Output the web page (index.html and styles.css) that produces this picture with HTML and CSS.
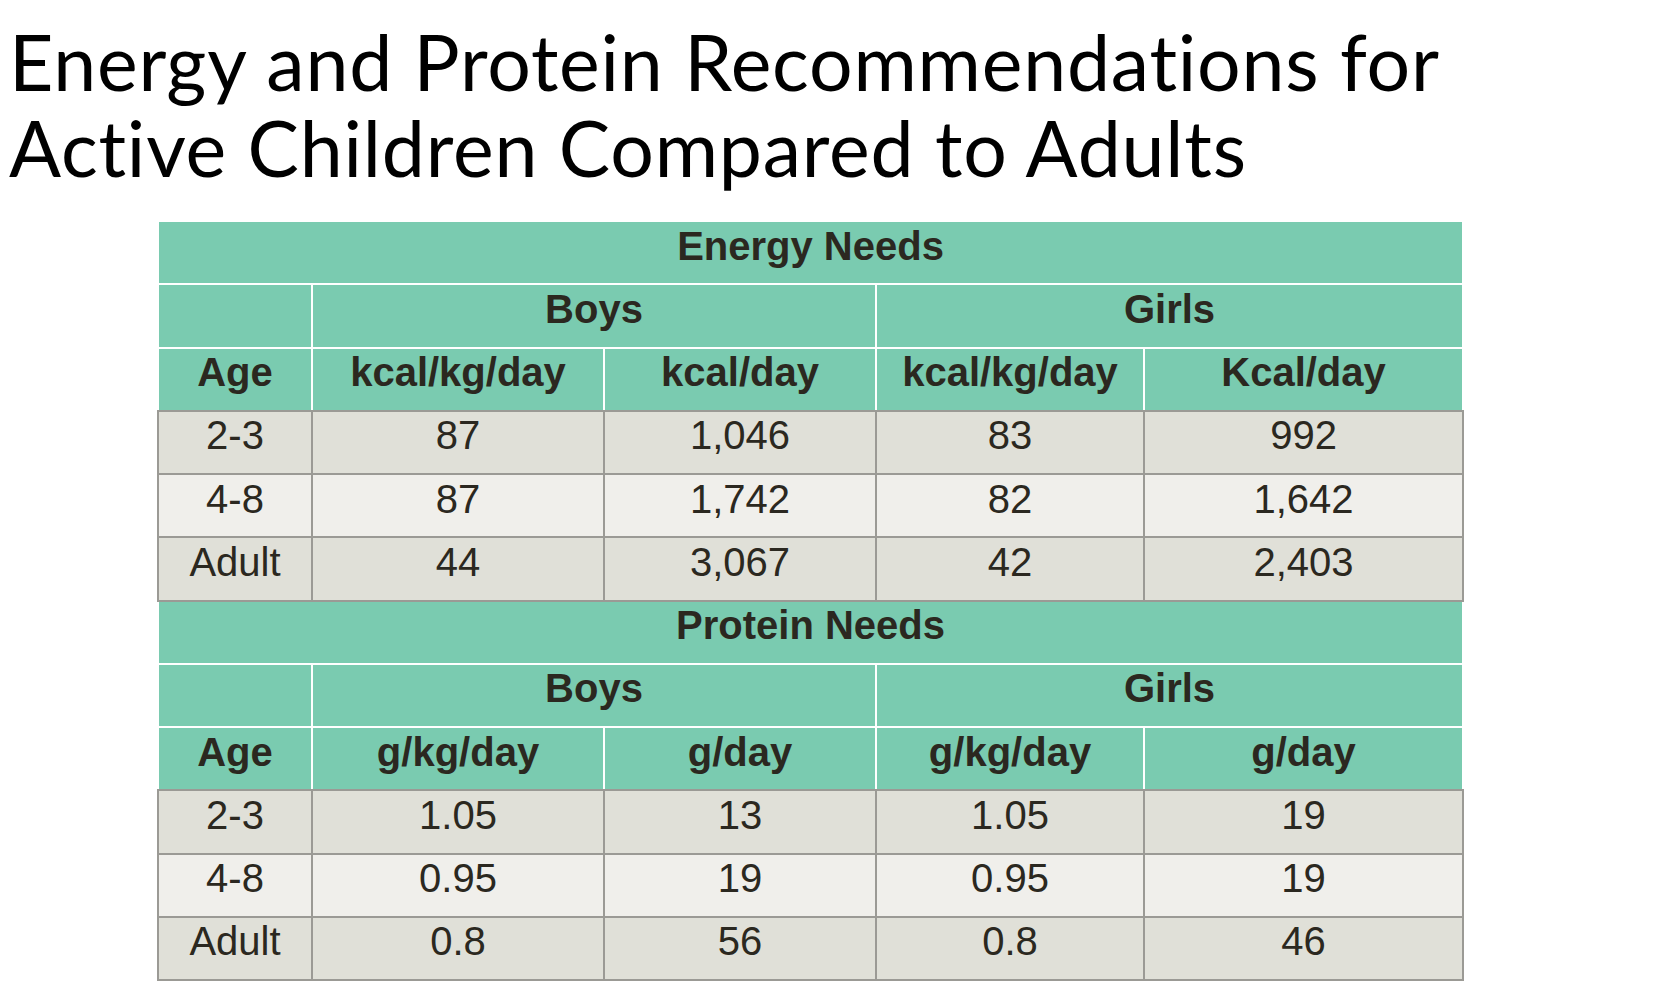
FILE: index.html
```html
<!DOCTYPE html>
<html lang="en">
<head>
<meta charset="utf-8">
<title>Energy and Protein Recommendations</title>
<link rel="stylesheet" href="styles.css">
</head>
<body>
<div class="slide">
  <h1 class="title">Energy and Protein Recommendations for<br>Active Children Compared to Adults</h1>
  <table class="needs">
    <colgroup>
      <col class="c-age"><col class="c-b1"><col class="c-b2"><col class="c-g1"><col class="c-g2">
    </colgroup>
    <tbody>
      <tr class="hd"><th colspan="5">Energy Needs</th></tr>
      <tr class="hd"><th></th><th colspan="2">Boys</th><th colspan="2">Girls</th></tr>
      <tr class="hd last"><th>Age</th><th>kcal/kg/day</th><th>kcal/day</th><th>kcal/kg/day</th><th>Kcal/day</th></tr>
      <tr class="odd"><td>2-3</td><td>87</td><td>1,046</td><td>83</td><td>992</td></tr>
      <tr class="even"><td>4-8</td><td>87</td><td>1,742</td><td>82</td><td>1,642</td></tr>
      <tr class="odd"><td>Adult</td><td>44</td><td>3,067</td><td>42</td><td>2,403</td></tr>
      <tr class="hd"><th colspan="5">Protein Needs</th></tr>
      <tr class="hd"><th></th><th colspan="2">Boys</th><th colspan="2">Girls</th></tr>
      <tr class="hd last"><th>Age</th><th>g/kg/day</th><th>g/day</th><th>g/kg/day</th><th>g/day</th></tr>
      <tr class="odd"><td>2-3</td><td>1.05</td><td>13</td><td>1.05</td><td>19</td></tr>
      <tr class="even"><td>4-8</td><td>0.95</td><td>19</td><td>0.95</td><td>19</td></tr>
      <tr class="odd"><td>Adult</td><td>0.8</td><td>56</td><td>0.8</td><td>46</td></tr>
    </tbody>
  </table>
</div>
</body>
</html>
```

FILE: styles.css
```css
html, body {
  margin: 0;
  padding: 0;
  background: #ffffff;
}

.slide {
  width: 1660px;
  height: 986px;
  overflow: hidden;
}

.title {
  margin: 18px 0 0 9px;
  font-family: "Lato", "Liberation Sans", sans-serif;
  font-weight: 400;
  font-size: 77px;
  line-height: 86px;
  color: #000000;
  letter-spacing: 0.8px;
  font-variant-ligatures: none;
}

.needs {
  margin: 30px 0 0 157px;
  width: 1305px;
  table-layout: fixed;
  border-collapse: collapse;
  font-family: "Liberation Sans", Arial, sans-serif;
  font-size: 40px;
  color: #2b2820;
}

.c-age { width: 154px; }
.c-b1 { width: 292px; }
.c-b2 { width: 272px; }
.c-g1 { width: 268px; }
.c-g2 { width: 319px; }

.needs tr {
  height: 63.25px;
}

.needs th,
.needs td {
  padding: 0 0 14px;
  text-align: center;
  vertical-align: middle;
  line-height: 46px;
}

.needs th {
  background: #7acbb0;
  font-weight: 700;
  border: 2px solid #ffffff;
}

.needs tr.last th {
  border-bottom-color: #9b9a95;
}

.needs td {
  font-weight: 400;
  border: 2px solid #9b9a95;
}

.needs tr.odd td {
  background: #e0e0d8;
}

.needs tr.even td {
  background: #f0efeb;
}
```
